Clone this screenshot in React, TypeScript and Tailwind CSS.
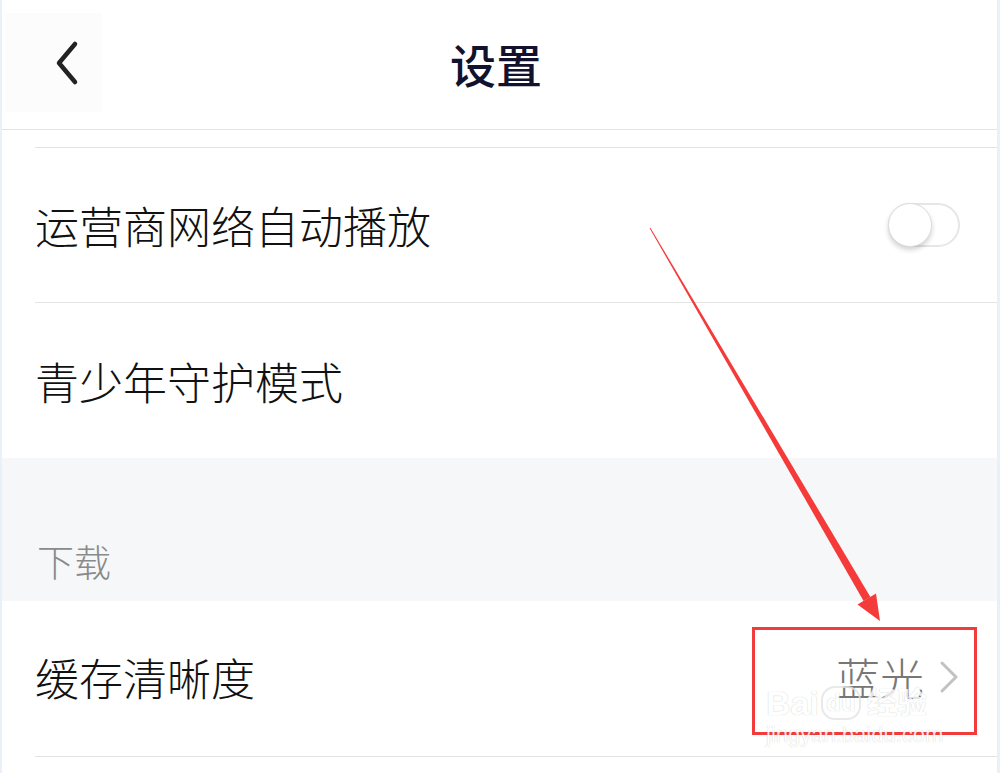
import React from 'react';

const FONT = { fontFamily: '"Noto Sans CJK SC", "Noto Sans", sans-serif' };

function Toggle() {
  return (
    <div className="relative h-[44px] w-[72px] rounded-full border-2 border-[#e6e6e6] bg-white">
      <div className="absolute left-[-2px] top-[-2px] h-[44px] w-[44px] rounded-full border border-[#dedede] bg-white shadow-[0_3px_5px_rgba(0,0,0,0.18)]" />
    </div>
  );
}

export default function App() {
  return (
    <div
      className="relative h-[773px] w-[1000px] overflow-hidden border-l-2 border-r-[3px] border-[#eaf0fa] bg-white"
      style={FONT}
    >
      {/* Header */}
      <div className="grid h-[130px] grid-cols-[100px_1fr_107px] border-b border-[#e3e3e3]">
        <div className="ml-[3px] mt-[13px] flex h-[99px] w-[97px] items-center justify-center bg-[#fcfcfc]">
          <svg width="30" height="46" viewBox="0 0 30 46" fill="none" className="ml-[26px]">
            <path d="M23 4 L7 23 L23 42" stroke="#222" strokeWidth="4.5" strokeLinecap="round" strokeLinejoin="round" />
          </svg>
        </div>
        <div className="flex items-center justify-center pb-[2px] text-[46px] font-medium text-[#12122e]">设置</div>
        <div />
      </div>

      <div className="h-[17px]" />

      {/* Playback rows */}
      <div className="pl-[33px]">
        <div className="flex h-[155px] items-center justify-between border-t border-[#e3e3e3] pr-[37px]">
          <span className="text-[44px] font-light text-[#111]">运营商网络自动播放</span>
          <Toggle />
        </div>
        <div className="flex h-[156px] items-center border-t border-[#e3e3e3]">
          <span className="text-[44px] font-light text-[#111]">青少年守护模式</span>
        </div>
      </div>

      {/* Download section */}
      <div className="flex h-[143px] items-end bg-[#f6f7f9] pb-[12px] pl-[35px]">
        <span className="text-[37px] font-light text-[#8a8a8a]">下载</span>
      </div>

      <div className="pl-[33px]">
        <div className="flex h-[156px] items-center justify-between border-b border-[#e3e3e3] pr-[37px]">
          <span className="mb-[4px] text-[44px] font-light text-[#111]">缓存清晰度</span>
          <div className="mb-[4px] flex items-center gap-[14px]">
            <span className="text-[44px] font-light text-[#777]">蓝光</span>
            <svg width="22" height="34" viewBox="0 0 22 34" fill="none">
              <path d="M4 3 L18 17 L4 31" stroke="#c2c2c2" strokeWidth="3" strokeLinecap="round" strokeLinejoin="round" />
            </svg>
          </div>
        </div>
      </div>

      {/* Annotation: red box */}
      <div className="pointer-events-none absolute left-[750px] top-[627px] h-[108px] w-[225px] border-[3px] border-[#f23b3b]" />

      {/* Watermark */}
      <div className="pointer-events-none absolute left-[764px] top-[686px] flex flex-col text-white" style={{ fontFamily: '"Liberation Sans", "Noto Sans CJK SC", sans-serif' }}>
        <div className="flex items-center text-[34px] font-bold leading-none opacity-80 [text-shadow:0_0_1px_rgba(0,0,0,0.3)]">
          <span>Bai</span>
          <span className="mx-[2px] flex h-[34px] w-[40px] items-center justify-center rounded-[14px] border-2 border-[#e4e4e4] text-[24px]">du</span>
          <span className="ml-[4px] text-[30px]">经验</span>
        </div>
        <div className="mt-[4px] text-[22px] leading-none opacity-80 [text-shadow:0_0_1px_rgba(0,0,0,0.3)]">jingyan.baidu.com</div>
      </div>

      {/* Annotation: arrow */}
      <svg className="pointer-events-none absolute left-0 top-0" width="1000" height="773" viewBox="0 0 1000 773">
        <polygon points="647.6,228.2 648.4,227.8 868.4,597 861.6,601" fill="#f53a3a" />
        <polygon points="878,621 855.5,604.5 874,593.5" fill="#f53a3a" />
      </svg>
    </div>
  );
}
